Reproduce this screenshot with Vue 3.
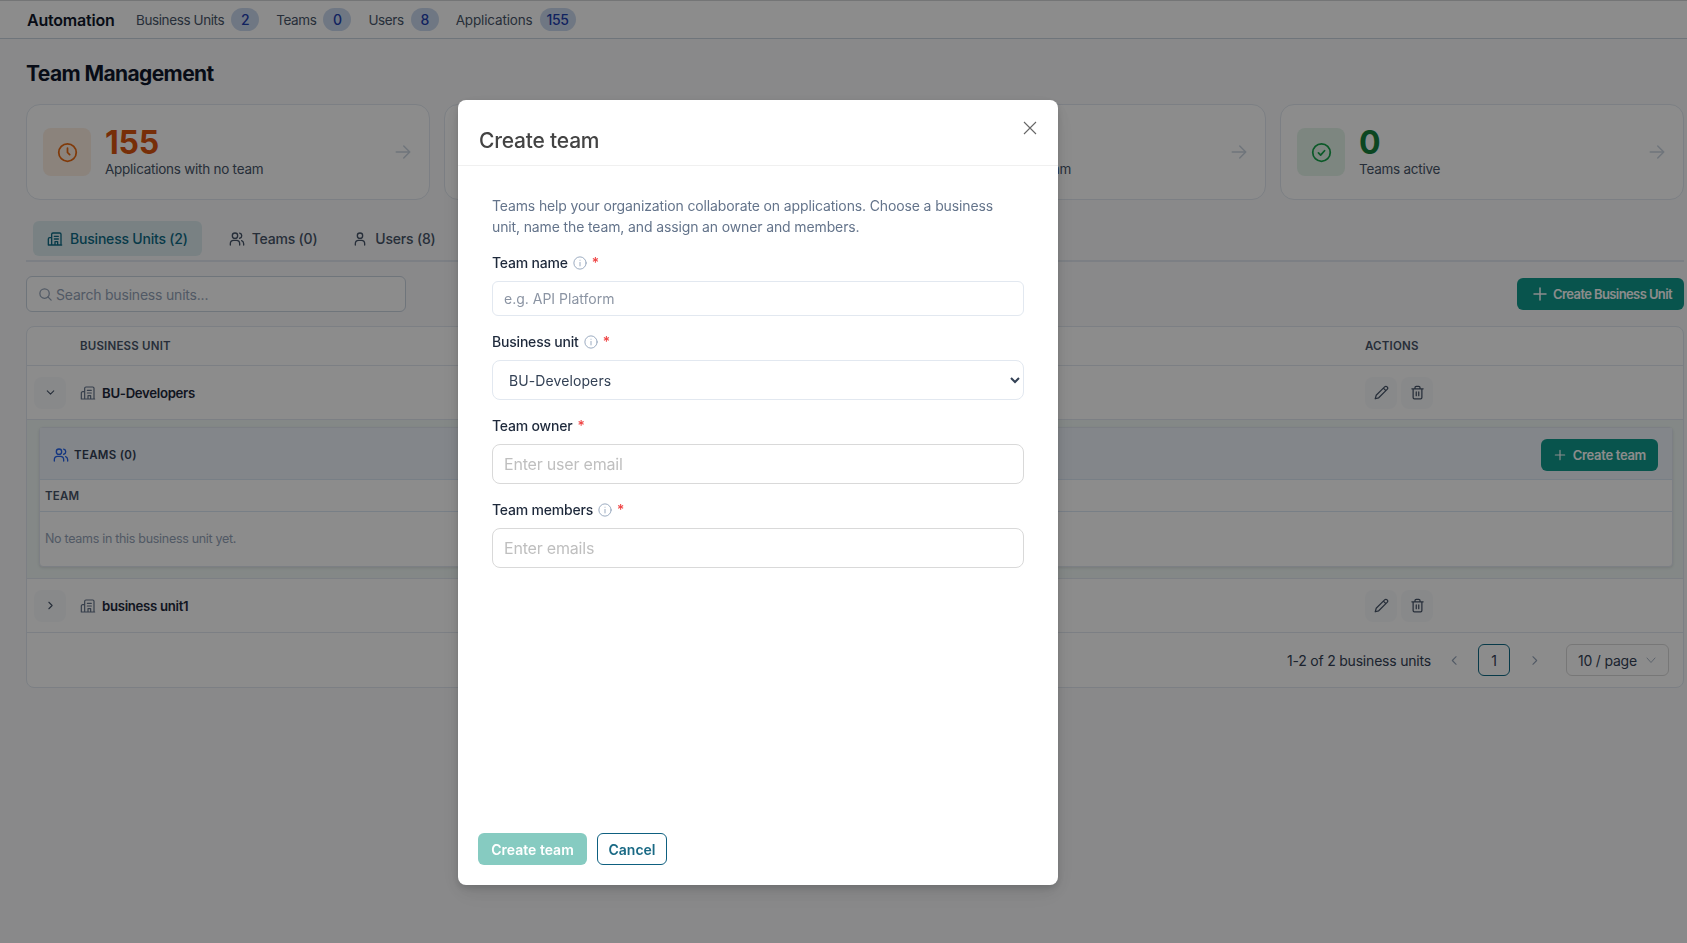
<template>
  <div class="page">
    <header class="topbar">
      <span class="brand">Automation</span>
      <nav class="topnav">
        <span v-for="n in navItems" :key="n.label" class="nav-item">
          {{ n.label }}<b class="badge">{{ n.count }}</b>
        </span>
      </nav>
    </header>

    <main class="content">
      <h1 class="title">Team Management</h1>

      <section class="stats">
        <div v-for="(c, i) in stats" :key="i" class="stat" :class="c.tone">
          <div class="stat-icon">
            <svg v-if="c.tone === 'warn'" viewBox="0 0 24 24" width="24" height="24" fill="none" stroke="currentColor" stroke-width="2" stroke-linecap="round" stroke-linejoin="round"><circle cx="12" cy="12" r="10" /><path d="M12 7v5l2.5 2.5" /></svg>
            <svg v-else viewBox="0 0 24 24" width="24" height="24" fill="none" stroke="currentColor" stroke-width="2" stroke-linecap="round" stroke-linejoin="round"><circle cx="12" cy="12" r="10" /><path d="m8.5 12.5 2.5 2.5 4.5-5" /></svg>
          </div>
          <div class="stat-text">
            <div class="stat-num">{{ c.value }}</div>
            <div class="stat-label">{{ c.label }}</div>
          </div>
          <svg class="stat-arrow" viewBox="0 0 24 24" width="18" height="18" fill="none" stroke="currentColor" stroke-width="2" stroke-linecap="round" stroke-linejoin="round"><path d="M3 12h18M13 4l8 8-8 8" /></svg>
        </div>
      </section>

      <div class="tabs">
        <div class="tab active">
          <svg viewBox="0 0 24 24" width="16" height="16" fill="none" stroke="currentColor" stroke-width="2" stroke-linecap="round" stroke-linejoin="round"><path d="M7 21V5a2 2 0 0 1 2-2h10a2 2 0 0 1 2 2v16M7 10H4a2 2 0 0 0-2 2v9M2 21h20M11 8h6M11 12h6M12 21v-5h4v5" /></svg>
          Business Units (2)
        </div>
        <div class="tab">
          <svg viewBox="0 0 24 24" width="16" height="16" fill="none" stroke="currentColor" stroke-width="2" stroke-linecap="round" stroke-linejoin="round"><circle cx="9" cy="7" r="4" /><path d="M2 21v-2a5 5 0 0 1 5-5h4a5 5 0 0 1 5 5v2M16 3.1a4 4 0 0 1 0 7.8M22 21v-2a5 5 0 0 0-3-4.6" /></svg>
          Teams (0)
        </div>
        <div class="tab">
          <svg viewBox="0 0 24 24" width="16" height="16" fill="none" stroke="currentColor" stroke-width="2" stroke-linecap="round" stroke-linejoin="round"><circle cx="12" cy="7" r="4" /><path d="M5 21v-2a5 5 0 0 1 5-5h4a5 5 0 0 1 5 5v2" /></svg>
          Users (8)
        </div>
      </div>

      <div class="toolbar">
        <div class="search">
          <svg viewBox="0 0 24 24" width="15" height="15" fill="none" stroke="currentColor" stroke-width="2" stroke-linecap="round"><circle cx="10.5" cy="10.5" r="7.5" /><path d="m21 21-5.2-5.2" /></svg>
          <span>Search business units...</span>
        </div>
        <button class="btn-primary">
          <svg viewBox="0 0 24 24" width="18" height="18" fill="none" stroke="currentColor" stroke-width="2" stroke-linecap="round"><path d="M12 4v16M4 12h16" /></svg>
          Create Business Unit
        </button>
      </div>

      <section class="table">
        <div class="thead">
          <span class="th-name">BUSINESS UNIT</span>
          <span class="th-actions">ACTIONS</span>
        </div>

        <div class="row">
          <span class="toggle"><svg viewBox="0 0 24 24" width="13" height="13" fill="none" stroke="currentColor" stroke-width="2" stroke-linecap="round" stroke-linejoin="round"><path d="m6 9 6 6 6-6" /></svg></span>
          <svg class="bu-icon" viewBox="0 0 24 24" width="16" height="16" fill="none" stroke="currentColor" stroke-width="1.8" stroke-linecap="round" stroke-linejoin="round"><path d="M7 21V5a2 2 0 0 1 2-2h10a2 2 0 0 1 2 2v16M7 10H4a2 2 0 0 0-2 2v9M2 21h20M11 8h6M11 12h6M12 21v-5h4v5" /></svg>
          <span class="bu-name">BU-Developers</span>
          <span class="row-actions">
            <span class="act"><svg viewBox="0 0 24 24" width="15" height="15" fill="none" stroke="currentColor" stroke-width="2" stroke-linecap="round" stroke-linejoin="round"><path d="M17 3a2.8 2.8 0 1 1 4 4L7.5 20.5 2 22l1.5-5.5zM15 5l4 4" /></svg></span>
            <span class="act"><svg viewBox="0 0 24 24" width="15" height="15" fill="none" stroke="currentColor" stroke-width="2" stroke-linecap="round" stroke-linejoin="round"><path d="M3 6h18M19 6v14a2 2 0 0 1-2 2H7a2 2 0 0 1-2-2V6M8 6V4a2 2 0 0 1 2-2h4a2 2 0 0 1 2 2v2M10 11v6M14 11v6" /></svg></span>
          </span>
        </div>

        <div class="expanded">
          <div class="inner">
            <div class="inner-head">
              <svg viewBox="0 0 24 24" width="16" height="16" fill="none" stroke="currentColor" stroke-width="2" stroke-linecap="round" stroke-linejoin="round"><circle cx="9" cy="7" r="4" /><path d="M2 21v-2a5 5 0 0 1 5-5h4a5 5 0 0 1 5 5v2M16 3.1a4 4 0 0 1 0 7.8M22 21v-2a5 5 0 0 0-3-4.6" /></svg>
              <span class="inner-title">TEAMS (0)</span>
              <button class="btn-primary small">
                <svg viewBox="0 0 24 24" width="14" height="14" fill="none" stroke="currentColor" stroke-width="2" stroke-linecap="round"><path d="M12 4v16M4 12h16" /></svg>
                Create team
              </button>
            </div>
            <div class="inner-th">TEAM</div>
            <div class="inner-empty">No teams in this business unit yet.</div>
          </div>
        </div>

        <div class="row">
          <span class="toggle"><svg viewBox="0 0 24 24" width="13" height="13" fill="none" stroke="currentColor" stroke-width="2" stroke-linecap="round" stroke-linejoin="round"><path d="m9 6 6 6-6 6" /></svg></span>
          <svg class="bu-icon" viewBox="0 0 24 24" width="16" height="16" fill="none" stroke="currentColor" stroke-width="1.8" stroke-linecap="round" stroke-linejoin="round"><path d="M7 21V5a2 2 0 0 1 2-2h10a2 2 0 0 1 2 2v16M7 10H4a2 2 0 0 0-2 2v9M2 21h20M11 8h6M11 12h6M12 21v-5h4v5" /></svg>
          <span class="bu-name">business unit1</span>
          <span class="row-actions">
            <span class="act"><svg viewBox="0 0 24 24" width="15" height="15" fill="none" stroke="currentColor" stroke-width="2" stroke-linecap="round" stroke-linejoin="round"><path d="M17 3a2.8 2.8 0 1 1 4 4L7.5 20.5 2 22l1.5-5.5zM15 5l4 4" /></svg></span>
            <span class="act"><svg viewBox="0 0 24 24" width="15" height="15" fill="none" stroke="currentColor" stroke-width="2" stroke-linecap="round" stroke-linejoin="round"><path d="M3 6h18M19 6v14a2 2 0 0 1-2 2H7a2 2 0 0 1-2-2V6M8 6V4a2 2 0 0 1 2-2h4a2 2 0 0 1 2 2v2M10 11v6M14 11v6" /></svg></span>
          </span>
        </div>

        <div class="pager">
          <span class="pager-total">1-2 of 2 business units</span>
          <svg class="pager-arrow" viewBox="0 0 24 24" width="13" height="13" fill="none" stroke="currentColor" stroke-width="2" stroke-linecap="round" stroke-linejoin="round"><path d="m15 5-7 7 7 7" /></svg>
          <span class="page-num">1</span>
          <svg class="pager-arrow" viewBox="0 0 24 24" width="13" height="13" fill="none" stroke="currentColor" stroke-width="2" stroke-linecap="round" stroke-linejoin="round"><path d="m9 5 7 7-7 7" /></svg>
          <span class="page-size">10 / page
            <svg viewBox="0 0 24 24" width="12" height="12" fill="none" stroke="currentColor" stroke-width="1.6" stroke-linecap="round" stroke-linejoin="round"><path d="m4 8 8 9 8-9" /></svg>
          </span>
        </div>
      </section>
    </main>

    <div class="mask">
      <div class="modal">
        <div class="modal-head">
          <h2>Create team</h2>
          <svg class="modal-close" viewBox="0 0 14 14" width="14" height="14" fill="none" stroke="currentColor" stroke-width="1.1"><path d="M1 1l12 12M13 1 1 13" /></svg>
        </div>
        <div class="modal-body">
          <p class="intro">Teams help your organization collaborate on applications. Choose a business unit, name the team, and assign an owner and members.</p>

          <label class="field-label">Team name
            <svg class="info" viewBox="0 0 24 24" width="14" height="14" fill="none" stroke="currentColor" stroke-width="1.5" stroke-linecap="round"><circle cx="12" cy="12" r="10.5" /><path d="M12 11v6M12 7.2v.1" /></svg>
            <i class="req">*</i>
          </label>
          <input class="input-sm" placeholder="e.g. API Platform" />

          <label class="field-label">Business unit
            <svg class="info" viewBox="0 0 24 24" width="14" height="14" fill="none" stroke="currentColor" stroke-width="1.5" stroke-linecap="round"><circle cx="12" cy="12" r="10.5" /><path d="M12 11v6M12 7.2v.1" /></svg>
            <i class="req">*</i>
          </label>
          <select class="select"><option>BU-Developers</option></select>

          <label class="field-label">Team owner <i class="req">*</i></label>
          <input class="input-lg" placeholder="Enter user email" />

          <label class="field-label">Team members
            <svg class="info" viewBox="0 0 24 24" width="14" height="14" fill="none" stroke="currentColor" stroke-width="1.5" stroke-linecap="round"><circle cx="12" cy="12" r="10.5" /><path d="M12 11v6M12 7.2v.1" /></svg>
            <i class="req">*</i>
          </label>
          <input class="input-lg" placeholder="Enter emails" />
        </div>
        <div class="modal-foot">
          <button class="btn-disabled">Create team</button>
          <button class="btn-outline">Cancel</button>
        </div>
      </div>
    </div>
  </div>
</template>

<script setup>
const navItems = [
  { label: "Business Units", count: 2 },
  { label: "Teams", count: 0 },
  { label: "Users", count: 8 },
  { label: "Applications", count: 155 },
];

// the second card sits fully behind the modal, its text never shows
const stats = [
  { value: 155, label: "Applications with no team", tone: "warn" },
  { value: "", label: "", tone: "ok" },
  { value: 8, label: "Users without a team", tone: "warn" },
  { value: 0, label: "Teams active", tone: "ok" },
];
</script>

<style>
html, body { margin: 0; background: #fafbfc; }
</style>

<style scoped>
.page {
  height: 943px; overflow: hidden; background: #f9fafc; color: #0f172a;
  font-family: Inter, "Noto Sans", sans-serif; letter-spacing: -0.2px;
}
.topbar {
  display: flex; align-items: center; height: 39px; padding-left: 27px; box-sizing: border-box;
  background: #fff; border-top: 1px solid #d4d6d8; border-bottom: 1px solid #cbd5e1;
}
.brand { font-size: 16px; font-weight: 600; width: 109px; }
.topnav { display: flex; gap: 17px; }
.nav-item { display: flex; align-items: center; gap: 7px; font-size: 13.5px; letter-spacing: -0.4px; color: #475569; }
.nav-item:last-child { letter-spacing: -0.15px; }
.badge {
  min-width: 28px; height: 23px; padding: 0 7px; box-sizing: border-box; border-radius: 12px;
  background: #cbd9ee; color: #1e40af; font-size: 14px; font-weight: 500; letter-spacing: -0.4px;
  display: flex; align-items: center; justify-content: center;
}
.content { padding: 0 3px 0 26px; }
.title { margin: 20px 0 15px; font-size: 21px; line-height: 30px; font-weight: 700; letter-spacing: -0.6px; color: #0f172a; }
.stats { display: grid; grid-template-columns: repeat(4, 1fr); gap: 14px; }
.stat {
  display: flex; align-items: center; height: 96px; padding: 0 17px 0 16px; box-sizing: border-box;
  background: #fff; border: 1px solid #e2e8f0; border-radius: 14px;
}
.stat-icon {
  width: 48px; height: 48px; border-radius: 8px; flex: none; margin-right: 14px;
  display: flex; align-items: center; justify-content: center;
}
.stat-icon svg { width: 21px; height: 21px; }
.warn .stat-icon { background: #fdeee2; color: #ea6a12; }
.ok .stat-icon { background: #e4f5ea; color: #16a34a; }
.stat-text { flex: 1; }
.stat-num { padding-top: 1px; margin-bottom: -1px; font-size: 32px; line-height: 34px; font-weight: 700; }
.warn .stat-num { color: #d9550f; }
.ok .stat-num { color: #15803d; }
.stat-label { font-size: 13.5px; line-height: 20px; letter-spacing: -0.25px; color: #475569; }
.stat-arrow { color: #cbd5e1; flex: none; }
.tabs {
  display: flex; align-items: center; gap: 7px; margin-top: 21px; padding: 0 0 4px 7px; height: 35px;
  border-bottom: 2px solid #e2e8f0;
}
.tab {
  display: flex; align-items: center; gap: 7px; height: 35px; padding: 0 14px; font-size: 14px; font-weight: 500; color: #475569;
  border-radius: 6px;
}
.tab.active { background: #dcecef; color: #0e6a85; margin-right: 6px; }
.toolbar { display: flex; justify-content: space-between; align-items: center; margin-top: 14px; height: 36px; }
.search {
  width: 380px; height: 36px; box-sizing: border-box; display: flex; align-items: center; gap: 3px; padding-left: 11px;
  background: #fff; border: 1px solid #cbd5e1; border-radius: 6px; color: #94a3b8; font-size: 14px;
}
.btn-primary {
  display: flex; align-items: center; gap: 4px; height: 32px; padding: 0 12px 0 14px; border: 0; border-radius: 6px;
  background: #0f9a8c; color: #fff; font: inherit; font-size: 13px; font-weight: 600; letter-spacing: -0.6px;
}
.table { margin-top: 14px; background: #fff; border: 1px solid #e2e8f0; border-radius: 8px; }
.thead { display: flex; align-items: center; height: 38px; border-bottom: 1px solid #e2e8f0; font-size: 11.5px; font-weight: 600; color: #475569; letter-spacing: 0.2px; }
.th-name { margin-left: 53px; flex: 1; }
.th-actions { width: 318px; }
.row { display: flex; align-items: center; height: 54px; box-sizing: border-box; padding-left: 7px; border-bottom: 1px solid #e2e8f0; }
.toggle { width: 32px; height: 32px; border-radius: 8px; background: #f8fafc; color: #475569; display: flex; align-items: center; justify-content: center; }
.bu-icon { color: #64748b; margin: 0 6px 0 14px; }
.bu-name { flex: 1; font-size: 13.2px; font-weight: 600; letter-spacing: -0.3px; color: #1e293b; }
.row-actions { display: flex; gap: 4px; width: 318px; }
.act { width: 32px; height: 32px; border-radius: 8px; background: #f8fafc; color: #475569; display: flex; align-items: center; justify-content: center; }
.expanded { padding: 7px 10px 11px 12px; background: #f0f8f6; border-bottom: 1px solid #e2e8f0; }
.inner { background: #fff; border: 1px solid #e2e8f0; border-radius: 4px; box-shadow: 0 1px 3px rgba(0,0,0,.1); }
.inner-head { display: flex; align-items: center; height: 49px; padding: 2px 14px 0 13px; background: #eef4fb; border-bottom: 1px solid #dbe7f5; color: #2563eb; }
.inner-title { flex: 1; margin-left: 5px; font-size: 11.5px; font-weight: 600; letter-spacing: 0.3px; color: #334155; }
.btn-primary.small { padding: 0 12px; gap: 6px; letter-spacing: -0.3px; }
.inner-th { height: 31px; line-height: 33px; padding-left: 5px; border-bottom: 1px solid #dbe7f5; font-size: 11.5px; font-weight: 600; color: #475569; letter-spacing: 0.2px; }
.inner-empty { height: 54px; line-height: 53px; padding-left: 5px; font-size: 12.5px; letter-spacing: -0.3px; color: #94a3b8; }
.pager { display: flex; align-items: center; justify-content: flex-end; height: 54px; padding-right: 14px; font-size: 14px; color: #334155; }
.pager-total { margin-right: 17px; }
.pager-arrow { color: #94a3b8; }
.page-num { width: 32px; height: 32px; box-sizing: border-box; margin: 0 18px 0 17px; border: 1px solid #0e6a85; border-radius: 6px; display: flex; align-items: center; justify-content: center; }
.page-size { width: 103px; height: 32px; box-sizing: border-box; margin-left: 25px; padding: 0 11px; border: 1px solid #d9d9d9; border-radius: 6px; display: flex; align-items: center; justify-content: space-between; }
.page-size svg { color: #94a3b8; }

.mask { position: fixed; inset: 0; background: rgba(0, 0, 0, .45); }
.modal {
  position: absolute; left: 458px; top: 100px; width: 600px; height: 785px; box-sizing: border-box;
  display: flex; flex-direction: column; background: #fff; border-radius: 8px;
  box-shadow: 0 6px 16px rgba(0,0,0,.08), 0 3px 6px rgba(0,0,0,.12), 0 9px 28px rgba(0,0,0,.05);
}
.modal-head { height: 66px; box-sizing: border-box; position: relative; border-bottom: 1px solid #f0f0f0; }
.modal-head h2 { margin: 0; padding: 26px 0 0 21px; font-size: 21px; line-height: 30px; font-weight: 500; color: #434343; }
.modal-close { position: absolute; right: 21px; top: 21px; color: #666; }
.modal-body { flex: 1; padding: 29px 34px 0; }
.intro { margin: 0; max-width: 520px; font-size: 14px; line-height: 21px; letter-spacing: -0.13px; color: #64748b; }
.field-label { display: flex; align-items: center; gap: 5px; margin: 16px 0 8px; font-size: 14px; line-height: 20px; font-weight: 500; color: #1e293b; }
.info { color: #8ea0b8; }
.req { color: #ef4444; font-style: normal; }
input, select { display: block; width: 100%; box-sizing: border-box; background: #fff; font-family: inherit; letter-spacing: inherit; outline: none; }
.input-sm { height: 35px; padding: 0 11px; border: 1px solid #e2e8f0; border-radius: 6px; font-size: 14px; letter-spacing: 0; }
.input-sm::placeholder { color: #8b94a3; }
.select { height: 40px; padding: 0 12px; border: 1px solid #e2e8f0; border-radius: 8px; font-size: 14px; letter-spacing: 0.1px; color: #334155; }
.input-lg { height: 40px; padding: 0 11px; border: 1px solid #d9d9d9; border-radius: 8px; font-size: 16px; }
.input-lg::placeholder { color: #bfbfbf; }
.modal-foot { display: flex; gap: 10px; padding: 0 20px 20px; }
.modal-foot button { height: 32px; border-radius: 6px; font: inherit; font-size: 14px; font-weight: 600; box-sizing: border-box; }
.btn-disabled { width: 109px; border: 0; background: #86cbc1; color: #fff; }
.btn-outline { width: 70px; border: 1px solid #0e6080; background: #fff; color: #1a6a85; }
</style>
